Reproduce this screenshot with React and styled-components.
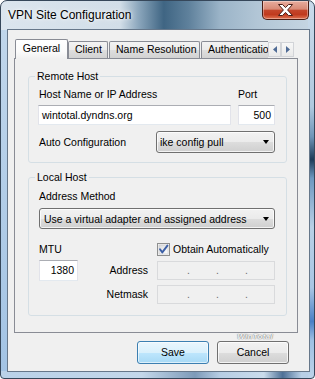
import React from 'react'
import styled, { createGlobalStyle } from 'styled-components'

const GlobalStyle = createGlobalStyle`
  html, body {
    margin: 0;
    padding: 0;
    background: #fff;
  }
  body {
    font-family: 'Liberation Sans', Arial, sans-serif;
    font-size: 10.5px;
    color: #000;
  }
  * {
    box-sizing: border-box;
  }
`

const Window = styled.div`
  width: 315px;
  height: 379px;
  display: flex;
  flex-direction: column;
  border: 1px solid #36475a;
  border-radius: 7px 7px 4px 4px;
  padding: 0 4px 6px 6px;
  overflow: hidden;
  background:
    linear-gradient(180deg, #cadbeb 0%, #b0c9df 28%, #6f95b8 36%, #1d3b58 42%, #6e98c0 47%, #b8d0e6 60%, #a9c6e4 76%, #4a80c6 85%, #9ec0e3 90%, #bdd3e9 100%) right top / 6px 100% no-repeat,
    linear-gradient(90deg, #dbe5ee 0%, #d2dee8 38%, #8ba6bc 44%, #3f6583 52%, #5f819c 60%, #9bb4c8 70%, #b2c6d6 82%, #c6d6e3 100%) left top / 100% 29px no-repeat,
    linear-gradient(90deg, #b9d1e8 0%, #c3d7ea 45%, #7d9ab8 62%, #b6cde4 70%, #cadcec 84%, #4e7096 90%, #b8cfe6 96%) left bottom / 100% 7px no-repeat,
    linear-gradient(180deg, #c3d8ec, #a2c3e4);
`

const TitleBar = styled.div`
  height: 28px;
  flex: none;
  display: flex;
  justify-content: space-between;
  align-items: flex-start;
`

const Title = styled.div`
  margin: 6px 0 0 1px;
  font-size: 12px;
  line-height: 16px;
  text-shadow: 0 0 6px rgba(255, 255, 255, 0.9), 0 0 3px rgba(255, 255, 255, 0.8);
`

const CloseButton = styled.div`
  width: 47px;
  height: 19px;
  margin-right: 1px;
  border: 1px solid #4b1d14;
  border-top: none;
  border-radius: 0 0 5px 5px;
  background: linear-gradient(180deg, #e8ad9e 0%, #d98a76 45%, #c4462b 52%, #c03a1e 75%, #e07452 100%);
  box-shadow: inset 0 0 0 1px rgba(255, 255, 255, 0.35);
  display: flex;
  align-items: center;
  justify-content: center;
`

const Client = styled.div`
  flex: 1;
  display: flex;
  flex-direction: column;
  background: #f0f0f0;
  border: 1px solid #66778a;
  padding: 9px 11px 0 6px;
`

const TabRow = styled.div`
  height: 20px;
  margin-bottom: -1px;
  padding: 0 4px 0 1px;
  display: flex;
  align-items: flex-end;
  position: relative;
  z-index: 1;
`

const TabList = styled.div`
  flex: 1;
  height: 20px;
  display: flex;
  align-items: flex-end;
  overflow: hidden;
`

const Tab = styled.div`
  flex: none;
  width: ${p => p.w}px;
  margin-left: ${p => p.gap || 0}px;
  border: 1px solid #898c95;
  border-bottom: none;
  border-radius: 2px 2px 0 0;
  white-space: nowrap;
  ${p =>
    p.active
      ? `
    height: 20px;
    padding-top: 2px;
    line-height: 13px;
    text-align: center;
    background: linear-gradient(180deg, #ffffff 0%, #fbfbfb 60%, #f0f0f0 100%);
  `
      : `
    height: 17px;
    margin-bottom: 1px;
    padding-left: 6px;
    line-height: 15px;
    background: linear-gradient(180deg, #f3f3f3 0%, #ebebeb 50%, #dedede 51%, #d2d2d2 100%);
  `}
`

const ScrollArrows = styled.div`
  display: flex;
  margin-bottom: 2px;
`

const ArrowBox = styled.div`
  width: 13px;
  height: 15px;
  border: 1px solid #d2d4d8;
  background: linear-gradient(180deg, #f7f7f7, #e9e9e9);
  display: flex;
  align-items: center;
  justify-content: center;
`

const Page = styled.div`
  border: 1px solid #898c95;
  background: #f0f0f0;
  padding: 11px 10px 16px 13px;
`

const Group = styled.fieldset`
  margin: 0;
  padding: ${p => p.top}px 11px ${p => p.bottom}px 10px;
  border: 1px solid #d5dfe5;
  border-radius: 3px;
  min-width: 0;
  & + & {
    margin-top: 8px;
  }
`

const Legend = styled.legend`
  margin-left: -4px;
  padding: 0 2px;
  line-height: 13px;
`

const Label = styled.div`
  line-height: 13px;
  white-space: nowrap;
  text-align: ${p => p.align || 'left'};
`

const HostGrid = styled.div`
  margin-left: -1px;
  display: grid;
  grid-template-columns: 193px 37px;
  column-gap: 7px;
  row-gap: 4px;
  ${Label}:first-child {
    padding-left: 1px;
  }
`

const TextBox = styled.div`
  height: ${p => p.h || 20}px;
  background: #fff;
  border: 1px solid #e2e3ea;
  border-top-color: #abadb3;
  border-bottom-color: #e3e9ef;
  padding: 0 ${p => (p.right ? 3 : 2)}px 0 3px;
  line-height: ${p => (p.h || 20) - 2}px;
  text-align: ${p => (p.right ? 'right' : 'left')};
  white-space: nowrap;
`

const ComboRow = styled.div`
  margin-top: 6px;
  display: flex;
  align-items: center;
  justify-content: space-between;
`

const Combo = styled.div`
  width: ${p => (p.w ? `${p.w}px` : 'auto')};
  height: ${p => p.h}px;
  margin-top: ${p => p.mt || 0}px;
  display: flex;
  align-items: center;
  justify-content: space-between;
  padding: 0 5px 0 ${p => p.pl || 3}px;
  border: 1px solid #707070;
  border-radius: 3px;
  background: linear-gradient(180deg, #f2f2f2 0%, #ebebeb 50%, #dddddd 51%, #cfcfcf 100%);
  box-shadow: inset 0 0 0 1px rgba(255, 255, 255, 0.75);
  white-space: nowrap;
`

const Arrow = styled.span`
  width: 0;
  height: 0;
  border-left: 3.5px solid transparent;
  border-right: 3.5px solid transparent;
  border-top: 4px solid #000;
`

const LocalGrid = styled.div`
  margin-top: 14px;
  display: grid;
  grid-template-columns: 39px 1fr 118px;
  grid-template-rows: 13px 21px 19px;
  column-gap: 9px;
  row-gap: 4px;
  align-items: center;
`

const CheckRow = styled.div`
  display: flex;
  align-items: center;
  gap: 3px;
  line-height: 13px;
  margin-top: -1px;
`

const IpField = styled.div`
  height: 19px;
  display: flex;
  align-items: flex-end;
  padding: 0 0 2px 3px;
  border: 1px solid #d9dadc;
  background: #f0f0f0;
  color: #6d6d6d;
  line-height: 13px;
`

const IpPart = styled.span`
  flex: 1;
`

const IpDot = styled.span`
  width: 3px;
  text-align: center;
`

const ButtonBar = styled.div`
  position: relative;
  display: flex;
  justify-content: flex-end;
  gap: 8px;
  padding: 8px 9px 6px 0;
`

const Watermark = styled.div`
  position: absolute;
  top: -1px;
  right: 25px;
  font-size: 8px;
  line-height: 9px;
  font-style: italic;
  font-weight: bold;
  letter-spacing: 0.3px;
  color: #f4f4f4;
  text-shadow: 0 0 1px #7a7a7a, 0 0 1px #7a7a7a;
`

const Button = styled.div`
  width: 72px;
  height: 23px;
  line-height: 21px;
  text-align: center;
  border-radius: 3px;
  border: 1px solid ${p => (p.primary ? '#3c7fb1' : '#707070')};
  background: ${p =>
    p.primary
      ? 'linear-gradient(180deg, #eaf6fd 0%, #d9f0fc 50%, #bee6fd 51%, #a7d9f5 100%)'
      : 'linear-gradient(180deg, #f2f2f2 0%, #ebebeb 50%, #dddddd 51%, #cfcfcf 100%)'};
  box-shadow: inset 0 0 0 1px ${p => (p.primary ? 'rgba(255,255,255,0.6)' : 'rgba(255,255,255,0.75)')};
`

const CloseGlyph = () => (
  <svg width='15' height='12' viewBox='0 0 15 12'>
    <polygon
      points='0.5,0.5 4.5,0.5 7.5,3.6 10.5,0.5 14.5,0.5 9.6,6 14.5,11.5 10.5,11.5 7.5,8.4 4.5,11.5 0.5,11.5 5.4,6'
      fill='#fff'
      stroke='#4a1f18'
      strokeWidth='1'
      strokeLinejoin='round'
    />
  </svg>
)

const SmallTriangle = ({ dir }) => (
  <svg width='4' height='7' viewBox='0 0 4 7'>
    <polygon points={dir === 'left' ? '4,0 0,3.5 4,7' : '0,0 4,3.5 0,7'} fill='#4f6b95' />
  </svg>
)

const CheckBox = () => (
  <svg width='13' height='13' viewBox='0 0 13 13'>
    <defs>
      <linearGradient id='cbg' x1='0' y1='0' x2='1' y2='1'>
        <stop offset='0' stopColor='#d9dadc' />
        <stop offset='1' stopColor='#ffffff' />
      </linearGradient>
    </defs>
    <rect x='0.5' y='0.5' width='12' height='12' fill='#f4f4f4' stroke='#8e8f8f' />
    <rect x='2' y='2' width='9' height='9' fill='url(#cbg)' stroke='#c5c7ca' strokeWidth='0.6' />
    <path d='M3 6.3 L5.3 9.4 L10.4 2.6' fill='none' stroke='#3c5fa6' strokeWidth='1.9' strokeLinecap='round' strokeLinejoin='round' />
  </svg>
)

const IpAddress = () => (
  <IpField>
    <IpPart />
    <IpDot>.</IpDot>
    <IpPart />
    <IpDot>.</IpDot>
    <IpPart />
    <IpDot>.</IpDot>
    <IpPart />
  </IpField>
)

export default function App() {
  return (
    <>
      <GlobalStyle />
      <Window>
        <TitleBar>
          <Title>VPN Site Configuration</Title>
          <CloseButton>
            <CloseGlyph />
          </CloseButton>
        </TitleBar>
        <Client>
          <TabRow>
            <TabList>
              <Tab active w={53}>General</Tab>
              <Tab w={40}>Client</Tab>
              <Tab w={91} gap={1}>Name Resolution</Tab>
              <Tab w={80} gap={1}>Authentication</Tab>
            </TabList>
            <ScrollArrows>
              <ArrowBox>
                <SmallTriangle dir='left' />
              </ArrowBox>
              <ArrowBox>
                <SmallTriangle dir='right' />
              </ArrowBox>
            </ScrollArrows>
          </TabRow>
          <Page>
            <Group top={5} bottom={9}>
              <Legend>Remote Host</Legend>
              <HostGrid>
                <Label>Host Name or IP Address</Label>
                <Label>Port</Label>
                <TextBox>wintotal.dyndns.org</TextBox>
                <TextBox right>500</TextBox>
              </HostGrid>
              <ComboRow>
                <Label>Auto Configuration</Label>
                <Combo w={119} h={22}>
                  <span>ike config pull</span>
                  <Arrow />
                </Combo>
              </ComboRow>
            </Group>
            <Group top={6} bottom={11}>
              <Legend>Local Host</Legend>
              <Label>Address Method</Label>
              <Combo h={21} mt={5} pl={4}>
                <span>Use a virtual adapter and assigned address</span>
                <Arrow />
              </Combo>
              <LocalGrid>
                <Label>MTU</Label>
                <span />
                <CheckRow>
                  <CheckBox />
                  <span>Obtain Automatically</span>
                </CheckRow>
                <TextBox right h={21}>1380</TextBox>
                <Label align='right'>Address</Label>
                <IpAddress />
                <span />
                <Label align='right'>Netmask</Label>
                <IpAddress />
              </LocalGrid>
            </Group>
          </Page>
          <ButtonBar>
            <Watermark>WinTotal</Watermark>
            <Button primary>Save</Button>
            <Button>Cancel</Button>
          </ButtonBar>
        </Client>
      </Window>
    </>
  )
}
